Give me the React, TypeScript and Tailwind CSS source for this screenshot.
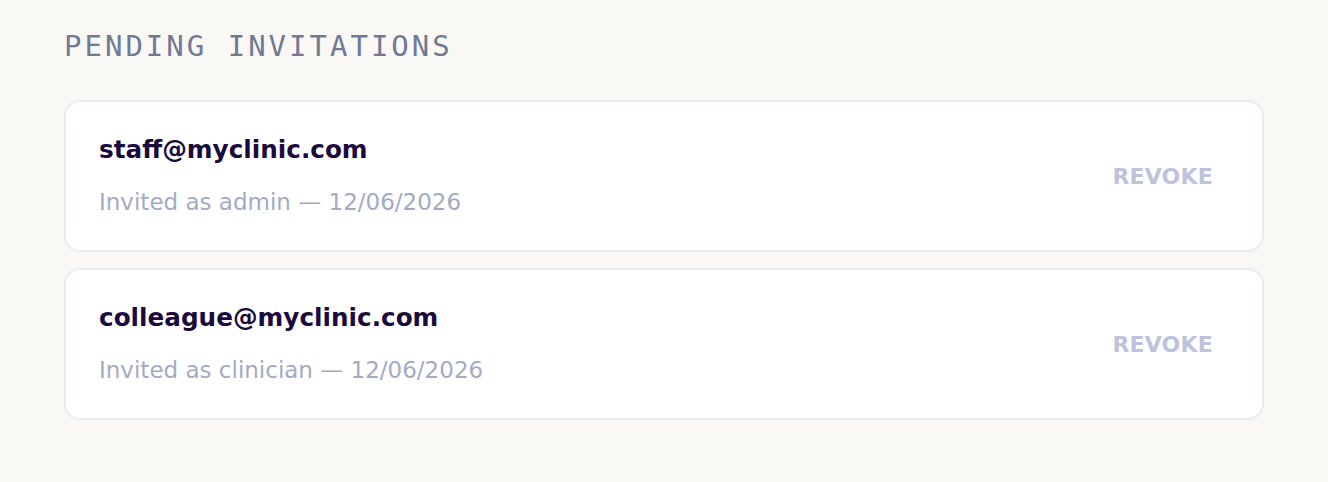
import React from "react";

const invites = [
  { email: "staff@myclinic.com", role: "admin", date: "12/06/2026" },
  { email: "colleague@myclinic.com", role: "clinician", date: "12/06/2026" },
];

export default function App() {
  return (
    <div className="min-h-[482px] w-full bg-[#f9f8f5] px-[64px] pt-[28px]">
      <h2
        className="text-[29px] leading-[36px] tracking-[3px] text-[#717a94] uppercase"
        style={{ fontFamily: '"DejaVu Sans Mono", monospace' }}
      >
        Pending Invitations
      </h2>
      <div className="mt-[36px] flex flex-col gap-[16px]">
        {invites.map((inv) => (
          <div
            key={inv.email}
            className="flex h-[152px] items-center justify-between rounded-[16px] border-2 border-[#e7ebf5] bg-white pl-[33px] pr-[49px]"
            style={{ fontFamily: '"DejaVu Sans", sans-serif' }}
          >
            <div className="flex flex-col">
              <div className="text-[24.7px] leading-[32px] font-bold text-[#1b0b3d]">
                {inv.email}
              </div>
              <div className="mt-[20px] text-[23px] leading-[32px] text-[#a3abc4]">
                Invited as {inv.role} — {inv.date}
              </div>
            </div>
            <button className="text-[22px] font-bold tracking-[0.2px] text-[#bcc3da]">
              REVOKE
            </button>
          </div>
        ))}
      </div>
    </div>
  );
}
